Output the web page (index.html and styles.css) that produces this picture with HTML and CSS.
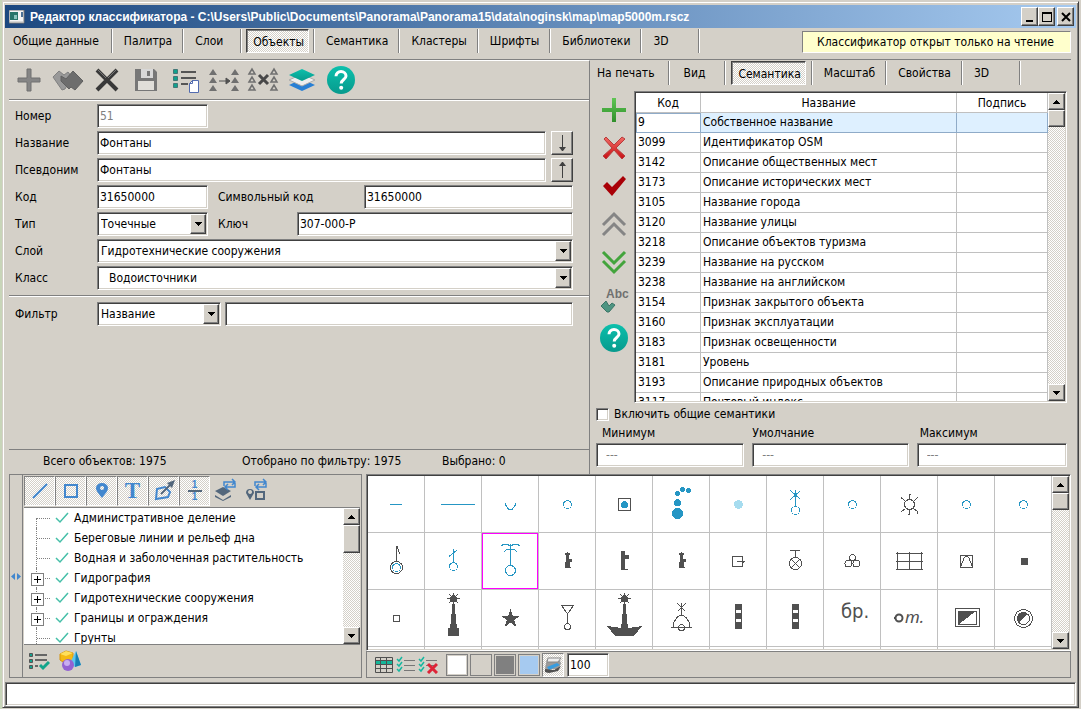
FILE: index.html
```html
<!DOCTYPE html>
<html lang="ru">
<head>
<meta charset="utf-8">
<title>Редактор классификатора</title>
<link rel="stylesheet" href="styles.css">
</head>
<body>
<svg width="0" height="0" class="defs" aria-hidden="true">
  <defs>
    <linearGradient id="teal" x1="0" y1="0" x2="0" y2="1"><stop offset="0" stop-color="#0cc0ac"/><stop offset="1" stop-color="#079a8d"/></linearGradient>
    <linearGradient id="green" x1="0" y1="0" x2="0" y2="1"><stop offset="0" stop-color="#5fc654"/><stop offset="1" stop-color="#2f8f2b"/></linearGradient>
    <linearGradient id="red" x1="0" y1="0" x2="0" y2="1"><stop offset="0" stop-color="#f26a64"/><stop offset="1" stop-color="#c80f14"/></linearGradient>
    <symbol id="help" viewBox="0 0 28 28"><circle cx="14" cy="14" r="14" fill="url(#teal)"/><path d="M9 10.200C9 7.300 11.200 5.600 14 5.600S19 7.300 19 10C19 13.400 14.200 13.600 14.200 17.400" fill="none" stroke="#fff" stroke-width="3"/><circle cx="14.200" cy="21.700" r="2" fill="#fff"/></symbol>
    <symbol id="up" viewBox="0 0 7 4"><path d="M3 0h1v1h1v1h1v1h1v1H0V3h1V2h1V1h1z"/></symbol>
    <symbol id="down" viewBox="0 0 7 4"><path d="M0 0h7v1H6v1H5v1H4v1H3V3H2V2H1V1H0z"/></symbol>
    <symbol id="tick" viewBox="0 0 14 12"><path d="M1 6l4 4L13 1" fill="none" stroke="#45bfa8" stroke-width="1.500"/></symbol>
    <symbol id="ring" viewBox="0 0 56 56"><circle cx="28.500" cy="28.500" r="4" fill="none" stroke="#2596c4"/></symbol>
    <symbol id="buoy" viewBox="0 0 56 56"><path d="M28 19h1v1h2v2h-1v4h3v3h-2v5h1v1h-6v-6h1v-7h-1v-2h2z" fill="#505050"/></symbol>
    <symbol id="pole" viewBox="0 0 56 56"><path d="M25 14h7v25h-7zM26 20v3h5v-3zM26 29v3h5v-3z" fill="#505050" fill-rule="evenodd"/></symbol>
    <symbol id="tower" viewBox="0 0 56 56"><path d="M27 14h3v10h1v10h1v4h2v8H23v-8h2v-4h1V24h1z" fill="#505050"/><path d="M28.500 3v11M22 8.500h13M24 4l9 9M33 4l-9 9" stroke="#505050"/><circle cx="28.500" cy="8.500" r="3.500" fill="#505050"/></symbol>
  </defs>
</svg>

<main class="window">
  <header class="titlebar">
    <svg class="app-icon" width="16" height="14" viewBox="0 0 16 14"><path d="M0 0h15v13H0z" fill="#f4f4f4" stroke="#777"/><path d="M1 2h8v8H1z" fill="#28756a"/><path d="M5 5h3v4H5z" fill="#8bc4bd"/><path d="M12 2h2v5h-2z" fill="#4c7196"/><path d="M1 12h14" stroke="#bbb"/></svg>
    <h1>Редактор классификатора - C:\Users\Public\Documents\Panorama\Panorama15\data\noginsk\map\map5000m.rscz</h1>
    <div class="window-buttons">
      <button aria-label="Свернуть"><svg width="12" height="12"><path d="M2 9h7v2H2z"/></svg></button>
      <button aria-label="Развернуть"><svg width="12" height="12"><path d="M1 1h10v10H1zM2 3v7h8V3z" fill-rule="evenodd"/></svg></button>
      <button class="close" aria-label="Закрыть"><svg width="12" height="12"><path d="M2 2l8 8M10 2l-8 8" stroke="#000" stroke-width="2"/></svg></button>
    </div>
  </header>

  <div class="content">
    <nav class="tabs main-tabs">
      <button class="tab first">Общие данные</button><button class="tab">Палитра</button><button class="tab wide">Слои</button><button class="tab active"><span>Объекты</span></button><button class="tab">Семантика</button><button class="tab">Кластеры</button><button class="tab">Шрифты</button><button class="tab">Библиотеки</button><button class="tab wide">3D</button>
      <p class="notice">Классификатор открыт только на чтение</p>
    </nav>

    <div class="upper">
      <section class="object-pane">
        <div class="toolbar">
          <button aria-label="Добавить"><svg width="28" height="28"><path d="M12 3h4v9h9v4h-9v9h-4v-9H3v-4h9z" fill="#858585" stroke="#707070"/></svg></button>
          <button aria-label="Копировать"><svg width="34" height="28"><path d="M2 11l6-6 5 4 4-3 4 5-7 12-3 1z" fill="#999" stroke="#808080"/><path d="M10 10l5 3 7-8 10 10-8 9-4-3-2 2-8-8z" fill="#6d6d6d" stroke="#606060"/></svg></button>
          <button aria-label="Удалить"><svg width="28" height="28"><path d="M4 4l20 20M24 4L4 24" stroke="#393939" stroke-width="4"/><path d="M5 4l8 8M23 4l-8 8" stroke="#777"/></svg></button>
          <button aria-label="Сохранить"><svg width="28" height="28"><path d="M3 3h19l3 3v19H3z" fill="#777"/><path d="M9 3h12v9H9z" fill="#d8d8d8"/><path d="M15 5h3v5h-3z" fill="#777"/><path d="M6 15h16v9H6z" fill="#e0ded9"/></svg></button>
          <button aria-label="Список"><svg width="28" height="28"><path d="M2.500 3.500h4v4h-4zM2.500 10.500h4v4h-4zM2.500 17.500h4v4h-4z" fill="#12a18d" stroke="#477"/><path d="M10 6h15M10 12h15M10 18h7" stroke="#555" stroke-width="2"/><path d="M21.500 14.500h6v12h-9v-9z" fill="#fff" stroke="#526baf"/><path d="M21.500 14v3.500h-3" fill="none" stroke="#526baf"/></svg></button>
          <button aria-label="Заменить"><svg width="34" height="28"><path d="M2 9l4-6 4 6zM2 17l4-6 4 6zM2 25l4-6 4 6zM24 9l4-6 4 6zM24 17l4-6 4 6zM24 25l4-6 4 6z" fill="#707070"/><path d="M12 15h9M19 12l4 3-4 3z" stroke="#505050" stroke-width="1" fill="#505050"/></svg></button>
          <button aria-label="Удалить группу"><svg width="34" height="28"><path d="M3 8l3-5 3 5zM3 16l3-5 3 5zM3 24l3-5 3 5zM25 8l3-5 3 5zM25 16l3-5 3 5zM25 24l3-5 3 5z" fill="none" stroke="#707070" stroke-width="1.500"/><path d="M13 9l9 9M22 9l-9 9" stroke="#484848" stroke-width="3"/></svg></button>
          <button aria-label="Слои"><svg width="28" height="28"><path d="M1 19l13-6 13 6-13 6z" fill="#287fd4"/><path d="M1 14l13-6 13 6-13 6z" fill="#eee" stroke="#aaa"/><path d="M1 9l13-6 13 6-13 6z" fill="url(#teal)"/></svg></button>
          <button aria-label="Справка"><svg width="28" height="28"><use href="#help"/></svg></button>
        </div>

        <form class="object-form">
          <div class="row"><label for="number">Номер</label><input id="number" class="short" value="51" disabled></div>
          <div class="row"><label for="name">Название</label><input id="name" class="grow" value="Фонтаны"><button type="button" class="square" aria-label="Вниз"><svg width="10" height="20"><path d="M5.500 2v15" stroke="#404040"/><path d="M2 14h7l-3 4H5z" fill="#404040"/></svg></button></div>
          <div class="row"><label for="alias">Псевдоним</label><input id="alias" class="grow" value="Фонтаны"><button type="button" class="square" aria-label="Вверх"><svg width="10" height="20"><path d="M5.500 3v15" stroke="#404040"/><path d="M2 6h7L6 2H5z" fill="#404040"/></svg></button></div>
          <div class="row"><label for="code">Код</label><input id="code" class="short" value="31650000"><label class="code-label" for="symcode">Символьный код</label><input id="symcode" class="grow" value="31650000"></div>
          <div class="row"><label for="type">Тип</label><span class="combo short"><select id="type"><option>Точечные</option></select><i><svg width="7" height="4"><use href="#down"/></svg></i></span><label class="key-label" for="key">Ключ</label><input id="key" class="grow" value="307-000-P"></div>
          <div class="row"><label for="layer">Слой</label><span class="combo grow"><select id="layer"><option>Гидротехнические сооружения</option></select><i><svg width="7" height="4"><use href="#down"/></svg></i></span></div>
          <div class="row"><label for="class">Класс</label><span class="combo grow nested"><select id="class"><option>Водоисточники</option></select><i><svg width="7" height="4"><use href="#down"/></svg></i></span></div>
        </form>
        <div class="filter row"><label for="filter">Фильтр</label><span class="combo filter-kind"><select id="filter"><option>Название</option></select><i><svg width="7" height="4"><use href="#down"/></svg></i></span><input class="grow" aria-label="Текст фильтра"></div>
        <div class="spacer"></div>
        <footer class="totals"><span>Всего объектов: 1975</span><span>Отобрано по фильтру: 1975</span><span>Выбрано: 0</span></footer>
      </section>

      <section class="semantic-pane">
        <nav class="tabs side-tabs">
          <button class="tab print">На печать</button><button class="tab view">Вид</button><button class="tab active"><span>Семантика</span></button><button class="tab">Масштаб</button><button class="tab">Свойства</button><button class="tab wide">3D</button>
        </nav>
        <div class="semantic-body">
          <div class="side-tools">
            <button aria-label="Добавить"><svg width="28" height="28"><path d="M12 2h4v10h10v4H16v10h-4V16H2v-4h10z" fill="url(#green)"/></svg></button>
            <button aria-label="Удалить"><svg width="28" height="28"><path d="M4 5l2-2 8 8 8-8 3 2-9 9 9 8-3 3-8-9-8 9-3-3 9-8z" fill="url(#red)" stroke="#b63d3d"/></svg></button>
            <button aria-label="Применить"><svg width="28" height="28"><path d="M3 14l4-4 5 5L23 4l3 3-14 17z" fill="#a90007"/></svg></button>
            <button aria-label="Выше"><svg width="28" height="28"><path d="M3 15L14 4l11 11M3 25l11-11 11 11" fill="none" stroke="#858585" stroke-width="3"/></svg></button>
            <button aria-label="Ниже"><svg width="28" height="28"><path d="M3 4l11 11L25 4M3 13l11 11 11-11" fill="none" stroke="#43a43c" stroke-width="3"/></svg></button>
            <button class="abc" aria-label="Проверить текст"><span>Abc</span><svg width="16" height="13"><path d="M1 6l5-5 3 5 3-3 3 2-6 7H7z" fill="#4e9582" stroke="#3b7567"/></svg></button>
            <button aria-label="Справка"><svg width="28" height="28"><use href="#help"/></svg></button>
          </div>
          <div class="list-frame">
            <div class="table-clip">
              <table>
                <thead><tr><th class="c-code">Код</th><th>Название</th><th class="c-sign">Подпись</th></tr></thead>
                <tbody>
                  <tr class="current"><td>9</td><td>Собственное название</td><td></td></tr>
                  <tr><td>3099</td><td>Идентификатор OSM</td><td></td></tr>
                  <tr><td>3142</td><td>Описание общественных мест</td><td></td></tr>
                  <tr><td>3173</td><td>Описание исторических мест</td><td></td></tr>
                  <tr><td>3105</td><td>Название города</td><td></td></tr>
                  <tr><td>3120</td><td>Название улицы</td><td></td></tr>
                  <tr><td>3218</td><td>Описание объектов туризма</td><td></td></tr>
                  <tr><td>3239</td><td>Название на русском</td><td></td></tr>
                  <tr><td>3238</td><td>Название на английском</td><td></td></tr>
                  <tr><td>3154</td><td>Признак закрытого объекта</td><td></td></tr>
                  <tr><td>3160</td><td>Признак эксплуатации</td><td></td></tr>
                  <tr><td>3183</td><td>Признак освещенности</td><td></td></tr>
                  <tr><td>3181</td><td>Уровень</td><td></td></tr>
                  <tr><td>3193</td><td>Описание природных объектов</td><td></td></tr>
                  <tr><td>3117</td><td>Почтовый индекс</td><td></td></tr>
                </tbody>
              </table>
            </div>
            <div class="scroll"><button aria-label="Вверх"><svg width="7" height="4"><use href="#up"/></svg></button><div class="thumb"></div><button class="end" aria-label="Вниз"><svg width="7" height="4"><use href="#down"/></svg></button></div>
          </div>
        </div>
        <label class="check"><input type="checkbox">Включить общие семантики</label>
        <div class="limits">
          <label>Минимум<input value="---" disabled></label>
          <label>Умолчание<input value="---" disabled></label>
          <label>Максимум<input value="---" disabled></label>
        </div>
      </section>
    </div>

    <div class="lower">
      <section class="layers">
        <div class="splitter"><svg width="10" height="7"><path d="M4 0v7L0 3.500zM6 0v7l4-3.500z" fill="#4287ce"/></svg></div>
        <div class="layers-body">
          <div class="kinds">
            <button class="on" aria-label="Линии"><svg width="24" height="24"><path d="M5 19L19 5" stroke="#4287ce" stroke-width="2"/></svg></button>
            <button class="on" aria-label="Площади"><svg width="24" height="24"><path d="M6 6h12v12H6z" fill="none" stroke="#4287ce" stroke-width="2"/></svg></button>
            <button class="on" aria-label="Точки"><svg width="24" height="24"><path d="M12 19C9 15 6 12 6 9a6 5 0 0 1 12 0c0 3-3 6-6 10zM12 7a2 2 0 1 0 .1 0z" fill="#4287ce" fill-rule="evenodd"/></svg></button>
            <button class="on letter" aria-label="Подписи">T</button>
            <button class="on" aria-label="Векторы"><svg width="24" height="24"><path d="M5 10l8-2 5 5-2 5-12 2z" fill="none" stroke="#4287ce" stroke-width="2"/><path d="M9 15L20 4" stroke="#53677c" stroke-width="2"/><path d="M15 4l8-3-3 8z" fill="#53677c"/></svg></button>
            <button class="on" aria-label="Шаблоны"><span class="fraction"><b>1</b><b>1</b></span></button>
            <button aria-label="Переключить слои"><svg width="26" height="26"><path d="M2 13l8-4 8 4-8 5z" fill="#53677c"/><path d="M11 8V4h10M19 1l3 3-3 3M22 5v4H12M15 6l-3 3 3 3" fill="none" stroke="#4287ce" stroke-width="1.500"/><path d="M2 17l8 5 8-5v2l-8 4-8-4z" fill="#53677c"/></svg></button>
            <button aria-label="Переключить виды"><svg width="26" height="26"><path d="M6 22l-4-7a4 4 0 1 1 8 0zM6 12a2 2 0 1 0 .1 0z" fill="#53677c" fill-rule="evenodd"/><path d="M12 14h8v7h-8z" fill="none" stroke="#53677c" stroke-width="2"/><path d="M11 8V4h10M19 1l3 3-3 3M22 5v4H12M15 6l-3 3 3 3" fill="none" stroke="#4287ce" stroke-width="1.500"/></svg></button>
          </div>
          <div class="tree-frame">
            <ul class="tree">
              <li><i class="branch"></i><svg width="14" height="12"><use href="#tick"/></svg>Административное деление</li>
              <li><i class="branch"></i><svg width="14" height="12"><use href="#tick"/></svg>Береговые линии и рельеф дна</li>
              <li><i class="branch"></i><svg width="14" height="12"><use href="#tick"/></svg>Водная и заболоченная растительность</li>
              <li><i class="branch plus"></i><svg width="14" height="12"><use href="#tick"/></svg>Гидрография</li>
              <li><i class="branch plus"></i><svg width="14" height="12"><use href="#tick"/></svg>Гидротехнические сооружения</li>
              <li><i class="branch plus"></i><svg width="14" height="12"><use href="#tick"/></svg>Границы и ограждения</li>
              <li><i class="branch"></i><svg width="14" height="12"><use href="#tick"/></svg>Грунты</li>
            </ul>
            <div class="scroll"><button aria-label="Вверх"><svg width="7" height="4"><use href="#up"/></svg></button><div class="thumb tall"></div><button class="end" aria-label="Вниз"><svg width="7" height="4"><use href="#down"/></svg></button></div>
          </div>
          <div class="tree-tools">
            <button aria-label="Отметить"><svg width="22" height="20"><path d="M1.500 2.500h3v3h-3zM1.500 8.500h3v3h-3zM1.500 14.500h3v3h-3z" fill="#12a18d" stroke="#555"/><path d="M7 4h12M7 9h12M7 15h3" stroke="#666" stroke-width="2"/><path d="M12 14l3 3 6-6" fill="none" stroke="#11a58b" stroke-width="3"/></svg></button>
            <button aria-label="Цвета"><svg width="22" height="22"><path d="M1 4l6-3 7 2v8l-7 3-6-4z" fill="#f5b915" stroke="#d4950f"/><path d="M1 4l6 2 7-3-7-2z" fill="#ffdf5c"/><path d="M17 1l5 14-6 2-5-4z" fill="#5cc6ee"/><path d="M17 1l-1 16 6-2z" fill="#167fb5"/><circle cx="9" cy="15" r="6" fill="#9362d2"/><circle cx="8" cy="13" r="3" fill="#c8adf0"/></svg></button>
          </div>
        </div>
      </section>

      <section class="gallery">
        <div class="gallery-frame">
          <div class="symbols">
            <div><svg><path d="M22 28.500h12" class="b"/></svg></div>
            <div><svg><path d="M16 28.500h34" class="b"/></svg></div>
            <div><svg><path d="M23.500 27v2l3 4h4l3-4v-2" class="b"/></svg></div>
            <div><svg><use href="#ring"/></svg></div>
            <div><svg><path d="M22.500 22.500h12v12h-12z" class="g"/><circle cx="28.500" cy="28.500" r="3.500" class="bf"/></svg></div>
            <div><svg class="bf"><circle cx="24.500" cy="37.500" r="5.500"/><circle cx="24.500" cy="26.500" r="3.500"/><circle cx="24.500" cy="17.500" r="2.500"/><circle cx="29.500" cy="13.500" r="2.500"/><circle cx="35.500" cy="14.500" r="2.500"/></svg></div>
            <div><svg><circle cx="28.500" cy="28.500" r="4.500" fill="#a6dcef"/></svg></div>
            <div><svg class="b"><path d="M28.500 14v16M23.500 14.500l10 9M33.500 14.500l-10 9"/><circle cx="28.500" cy="34.500" r="4"/></svg></div>
            <div><svg><use href="#ring"/></svg></div>
            <div><svg class="g"><circle cx="28.500" cy="28.500" r="5"/><path d="M28.500 23.500v-5h1M28.500 33.500v5h-2M24.500 25.500l-4-4v1M32.500 25.500l4-4h-1M24.500 32.500l-4 3h-1M32.500 32.500l4 3v2h-1"/></svg></div>
            <div><svg><use href="#ring"/></svg></div>
            <div><svg><use href="#ring"/></svg></div>

            <div><svg><g class="g"><path d="M28.500 28V13.500h1l1 5 2 3"/><circle cx="28.500" cy="34.500" r="6"/></g><circle cx="28.500" cy="34.500" r="4" class="b"/></svg></div>
            <div><svg class="b"><path d="M28.500 16v13M24 23.500l8-6.500"/><circle cx="28.500" cy="33.500" r="4"/></svg></div>
            <div class="selected"><svg class="b"><path d="M28.500 11v21M19 12.500l3-1h3l3 1h1l3-1h3l3 1M22 18.500l3-2h7l3 2"/><circle cx="28.500" cy="37.500" r="5"/></svg></div>
            <div><svg><use href="#buoy"/></svg></div>
            <div><svg><path d="M25 18h4v4h4v4h-4v10h3v1h-7z" class="gf"/></svg></div>
            <div><svg><use href="#buoy"/></svg></div>
            <div><svg class="g"><path d="M22.500 23.500h10v10h-10zM27 28.500h8M33.500 27.500v2"/></svg></div>
            <div><svg class="g"><path d="M23 17.500h10M28.500 17v7M24.500 26.500l8 8M32.500 26.500l-8 8"/><circle cx="28.500" cy="30.500" r="6"/></svg></div>
            <div><svg class="g"><circle cx="28.500" cy="24.500" r="3"/><circle cx="24.500" cy="30.500" r="3.500"/><circle cx="32.500" cy="30.500" r="3.500"/></svg></div>
            <div><svg class="g"><path d="M15 20.500h27M15 28.500h27M15 36.500h27M16.500 19v18M28.500 19v18M40.500 19v18"/></svg></div>
            <div><svg class="g"><path d="M22.500 22.500h12v12h-12zM23 33l3-8 2-2h1l2 2 3 8"/></svg></div>
            <div><svg><path d="M26 25h7v7h-7z" class="gf"/></svg></div>

            <div><svg><path d="M25.500 25.500h6v6h-6z" class="g"/></svg></div>
            <div><svg><use href="#tower"/></svg></div>
            <div><svg><path d="M28.500 19l2.200 7H38l-5.800 4 2.300 7-6-4.400-6 4.400 2.300-7-5.800-4h7.300z" class="gf"/></svg></div>
            <div><svg class="g"><path d="M22.500 15.500h12l-6 8.500zM28.500 24v9"/><circle cx="28.500" cy="36.500" r="3"/></svg></div>
            <div><svg><use href="#tower"/><path d="M11 36l14 2h7l14-2-8 10H19z" class="gf"/></svg></div>
            <div><svg class="g"><path d="M28.500 13v12M24.500 13.500l8 8M32.500 13.500l-8 8M20.500 37v-4l3-5 3-2.500h4l3 2.500 3 5v4M18 37.500h21"/><circle cx="28.500" cy="37.500" r="3"/></svg></div>
            <div><svg><use href="#pole"/></svg></div>
            <div><svg><use href="#pole"/></svg></div>
            <div class="abbr">бр.</div>
            <div class="abbr slant"><svg class="dot"><circle cx="5" cy="5" r="3.500"/><path d="M0 5h2"/></svg><em>т.</em></div>
            <div><svg><path d="M17.500 18.500h24v18h-24zM20.500 21.500h18v13h-18z" class="g"/><path d="M20 21h18L20 35z" class="gf"/></svg></div>
            <div><svg><circle cx="28.500" cy="28.500" r="9" class="g"/><circle cx="28.500" cy="28.500" r="6" class="g"/><path d="M24 33a6 6 0 0 1 8-9z" class="gf"/></svg></div>

            <div></div><div></div><div></div><div></div><div></div><div></div><div></div><div></div><div></div><div></div><div></div><div></div>
          </div>
          <div class="scroll"><button aria-label="Вверх"><svg width="7" height="4"><use href="#up"/></svg></button><div class="thumb"></div><button class="end" aria-label="Вниз"><svg width="7" height="4"><use href="#down"/></svg></button></div>
        </div>
        <div class="gallery-tools">
          <button aria-label="Таблица"><svg width="20" height="18"><path d="M1 5h18v3H1z" fill="#14b699"/><path d="M1.500 1.500h17v15h-17zM1 4.500h18M1 8.500h18M1 12.500h18M6.500 1v15M12.500 1v15" fill="none" stroke="#505050"/></svg></button>
          <button aria-label="Выбрать все"><svg width="20" height="18"><path d="M8 4.500h11M8 9.500h11M8 14.500h11" stroke="#777"/><path d="M1 3l2 2 3-4M1 8l2 2 3-4M1 13l2 2 3-4" fill="none" stroke="#16b7a0" stroke-width="1.500"/></svg></button>
          <button aria-label="Снять выбор"><svg width="20" height="18"><path d="M8 4.500h11M8 9.500h11" stroke="#777"/><path d="M1 3l2 2 3-4M1 8l2 2 3-4M1 13l2 2 3-4" fill="none" stroke="#16b7a0" stroke-width="1.500"/><path d="M10 8l9 9M19 8l-9 9" stroke="#dd2438" stroke-width="3"/></svg></button>
          <button class="swatch white" aria-label="Белый фон"></button><button class="swatch" aria-label="Серый фон"></button><button class="swatch dark" aria-label="Темный фон"></button><button class="swatch blue" aria-label="Голубой фон"></button>
          <button class="print-button" aria-label="Печать"><svg width="20" height="20"><path d="M4 4h12l2 4-2 6H8l-4 4-2-5z" fill="#999"/><path d="M5 3h13l-3 4H4z" fill="#eee" stroke="#888"/><path d="M4 12l10-4 3 2-11 5z" fill="#369ce0"/><path d="M2 14l9 1 7-4-3 5-9 2-4-1z" fill="#505050"/></svg></button>
          <input class="scale" value="100" aria-label="Масштаб">
        </div>
      </section>
    </div>
  </div>
  <input class="message" aria-label="Сообщение" readonly>
</main>
</body>
</html>
```
FILE: styles.css
```css
* { box-sizing: border-box; }
body {
  margin: 0;
  height: 100vh;
  padding: 1px 2px;
  background: linear-gradient(90deg, #c8d5b9 2px, #d4d0c8 2px);
  color: #000;
  font: 12px/16px "DejaVu Sans Condensed", "DejaVu Sans", sans-serif;
}
button, input, select { font: inherit; color: inherit; margin: 0; border-radius: 0; }
button { padding: 0; border: 0; background: none; display: flex; align-items: center; justify-content: center; }
svg { display: block; flex: none; }
.defs { position: absolute; }
p, h1, ul { margin: 0; padding: 0; }

.window {
  display: flex;
  flex-direction: column;
  height: 100%;
  padding: 3px 2px 1px;
  background: #d4d0c8;
  border: 1px solid;
  border-color: #d4d0c8 #404040 #404040 #d4d0c8;
  box-shadow: inset 1px 1px #fff, inset -1px -1px #808080;
}
.titlebar {
  display: flex;
  align-items: center;
  flex: none;
  height: 23px;
  padding: 0 2px 0 4px;
  gap: 5px;
  background: linear-gradient(90deg, #1c4880, #a6caf0);
  color: #fff;
}
.titlebar h1 { flex: 1; font: bold 12px/16px "Liberation Sans", sans-serif; white-space: nowrap; }
.window-buttons { display: flex; color: #000; }
.window-buttons button, .square, .scroll button, .thumb, .combo i {
  background: #d4d0c8;
  border: 1px solid;
  border-color: #fff #404040 #404040 #fff;
  box-shadow: inset -1px -1px #808080;
}
.window-buttons button { width: 17px; height: 19px; }
.window-buttons .close { margin-left: 2px; }

.content { display: flex; flex-direction: column; flex: 1; min-height: 0; padding: 0 5px 4px 4px; }
.tabs { display: flex; flex: none; }
.tab {
  height: 24px;
  padding: 0 11px;
  border-right: 1px solid #fff;
  box-shadow: inset -1px 0 #808080;
  white-space: nowrap;
}
.tab.first { padding: 0 13px 0 4px; }
.tab.wide { min-width: 58px; justify-content: flex-start; }
.tab.active { padding: 0 5px 0 4px; }
.tab.active span, .kinds .on, .print-button {
  background: repeating-conic-gradient(#d4d0c8 0 25%, #fff 0 50%) 0 0 / 2px 2px;
  border: 1px solid;
  border-color: #404040 #fff #fff #404040;
}
.tab.active span { height: 24px; padding: 4px 4px 2px 6px; box-shadow: inset 1px 1px #808080; }
.main-tabs { height: 31px; padding-top: 1px; }
.notice {
  align-self: flex-start;
  margin: 2px 0 0 auto;
  padding: 2px 16px 2px 14px;
  background: #ffffcc;
  border: 1px solid;
  border-color: #808080 #fff #fff #808080;
  white-space: nowrap;
}

.upper {
  display: grid;
  grid-template-columns: minmax(0, 581fr) minmax(0, 481fr);
  grid-template-rows: minmax(0, 1fr);
  flex: 1;
  min-height: 0;
  border-top: 1px solid #808080;
}
.object-pane {
  display: flex;
  flex-direction: column;
  border-right: 1px solid #808080;
  border-top: 1px solid #fff;
}
.toolbar {
  display: flex;
  align-items: center;
  flex: none;
  height: 39px;
  border-bottom: 1px solid #808080;
  box-shadow: 0 1px #fff;
}
.toolbar button { width: 39px; height: 38px; }
.object-form { display: grid; gap: 3px; padding: 4px 16px 5px 6px; border-bottom: 1px solid #808080; box-shadow: 0 1px #fff; }
.row { display: flex; height: 24px; }
.row label { flex: none; width: 82px; padding-top: 4px; }
.row .code-label { width: 156px; padding-left: 10px; }
.row .key-label { width: 89px; padding-left: 10px; }
.grow { flex: 1; min-width: 0; }
.short { width: 111px; }
.filter { padding: 0 16px 0 6px; margin-top: 6px; }
.filter-kind { width: 124px; margin-right: 4px; }
.spacer { flex: 1; }
input:not([type="checkbox"]), .combo, .list-frame, .gallery-frame {
  background: #fff;
  border: 1px solid;
  border-color: #808080 #fff #fff #808080;
  box-shadow: inset 1px 1px #404040, inset -1px -1px #d4d0c8;
}
input:not([type="checkbox"]) { height: 24px; padding: 0 2px; }
input:disabled { color: #808080; }
.combo { position: relative; display: flex; }
.combo select { flex: 1; min-width: 0; padding: 0 18px 0 3px; border: 0; background: none; appearance: none; }
.combo.nested select { padding-left: 11px; }
.combo i {
  position: absolute;
  top: 1px;
  right: 1px;
  bottom: 1px;
  width: 16px;
  display: flex;
  align-items: center;
  justify-content: center;
  pointer-events: none;
}
.square { width: 22px; height: 24px; margin-left: 5px; }
.totals {
  display: grid;
  grid-template-columns: 199px 200px auto;
  flex: none;
  height: 25px;
  padding: 3px 0 0 34px;
  border-top: 1px solid #808080;
  white-space: nowrap;
}

.semantic-pane { display: flex; flex-direction: column; padding: 1px 4px 7px 6px; }
.side-tabs { height: 30px; }
.side-tabs .print { padding: 0 14px 0 1px; }
.side-tabs .view { padding: 0 20px 0 14px; }
.side-tabs .tab.active { padding: 0 6px 0 5px; }
.semantic-body { display: flex; flex: 1; min-height: 0; }
.side-tools { display: flex; flex-direction: column; flex: none; width: 38px; padding: 5px 0 0 4px; gap: 10px; }
.side-tools button { width: 28px; height: 28px; }
.side-tools .abc { flex-direction: column; align-items: flex-start; font: 12px/12px "Liberation Sans", sans-serif; color: #707070; }
.abc span { padding-left: 6px; font-weight: bold; }
.list-frame { display: flex; flex: 1; min-width: 0; padding: 1px; }
.table-clip { flex: 1; min-width: 0; overflow: hidden; }
table { width: 100%; table-layout: fixed; border-collapse: separate; border-spacing: 0; }
th, td { height: 20px; padding: 0 2px; border: 0 solid #c0c0c0; border-width: 0 1px 1px 0; line-height: 16px; white-space: nowrap; }
th { font-weight: normal; }
td { padding-bottom: 2px; }
.c-code { width: 65px; }
.c-sign { width: 91px; }
.current td { background: #def0ff; border-color: #8fabc8; }
.current td:first-child { background: #fff; box-shadow: inset 1px 1px #8fabc8; }
.scroll {
  display: flex;
  flex-direction: column;
  flex: none;
  width: 17px;
  background: repeating-conic-gradient(#d4d0c8 0 25%, #fff 0 50%) 0 0 / 2px 2px;
}
.scroll button { height: 17px; width: 17px; }
.thumb { height: 17px; }
.thumb.tall { height: 28px; }
.scroll .end { margin-top: auto; }
.check { display: flex; flex: none; align-items: center; gap: 5px; height: 22px; }
.check input {
  appearance: none;
  width: 13px;
  height: 13px;
  background: #fff;
  border: 1px solid;
  border-color: #808080 #fff #fff #808080;
  box-shadow: inset 1px 1px #404040, inset -1px -1px #d4d0c8;
}
.limits { display: grid; flex: none; grid-template-columns: 148fr 156fr 150fr; gap: 8px; }
.limits label { display: flex; flex-direction: column; gap: 2px; text-indent: 6px; }
.limits label + label { text-indent: 0; }
.limits label:last-child { text-indent: 3px; }
.limits input { width: 100%; }
.limits label input { padding-left: 9px; text-indent: 0; }

.lower {
  display: grid;
  grid-template-columns: minmax(0, 353fr) minmax(0, 705fr);
  grid-template-rows: minmax(0, 1fr);
  flex: none;
  height: 204px;
  gap: 4px;
}
.layers { display: flex; border: 1px solid #808080; }
.splitter { display: flex; align-items: center; justify-content: center; flex: none; width: 13px; border-right: 1px solid #808080; }
.layers-body { display: flex; flex-direction: column; flex: 1; min-width: 0; padding: 1px; }
.kinds { display: flex; flex: none; height: 31px; }
.kinds button { width: 31px; height: 30px; }
.kinds .on { border-color: #808080 #fff #fff #808080; }
.kinds .letter { color: #4287ce; font: bold 23px/24px "Liberation Serif", serif; }
.fraction { color: #4287ce; font: bold 10px/10px "Liberation Sans", sans-serif; }
.fraction b { display: block; width: 14px; }
.fraction b + b { border-top: 2px solid #53677c; }
.tree-frame { display: flex; flex: 1; min-height: 0; background: #fff; border: solid #808080; border-width: 1px 0; }
.tree { flex: 1; min-width: 0; overflow: hidden; list-style: none; }
.tree li { display: flex; align-items: center; height: 20px; padding-left: 12px; white-space: nowrap; }
.tree li svg { margin: 0 5px 0 6px; }
.branch {
  position: relative;
  width: 13px;
  height: 20px;
  border-left: 1px dotted #808080;
}
.tree li:first-child .branch { height: 10px; margin-top: 10px; }
.branch::before { content: ""; position: absolute; top: 10px; left: 0; width: 13px; border-top: 1px dotted #808080; }
.tree li:first-child .branch::before { top: 0; }
.plus::after {
  content: "";
  position: absolute;
  top: 5px;
  left: -6px;
  width: 11px;
  height: 11px;
  border: 1px solid #808080;
  background: linear-gradient(#000, #000) center / 7px 1px no-repeat, linear-gradient(#000, #000) center / 1px 7px no-repeat, #fff;
}
.tree-tools { display: flex; flex: none; align-items: center; height: 31px; padding-left: 4px; gap: 9px; }

.gallery { display: flex; flex-direction: column; }
.gallery-frame { display: flex; height: 177px; flex: none; padding: 1px; }
.symbols { display: grid; flex: 1; min-width: 0; grid-template-columns: repeat(12, 1fr); grid-auto-rows: 57px; overflow: hidden; }
.symbols > div { display: flex; justify-content: center; border: solid #c0c0c0; border-width: 0 1px 1px 0; }
.symbols > .selected { box-shadow: inset 0 0 0 1px #f0f; }
.symbols svg { width: 56px; height: 56px; shape-rendering: crispEdges; }
.b { fill: none; stroke: #2596c4; }
.g { fill: none; stroke: #505050; }
.bf { fill: #2596c4; }
.gf { fill: #505050; }
.symbols .abbr { padding: 11px 0 0 6px; color: #505050; font: 20px/20px "DejaVu Sans Condensed", "DejaVu Sans", sans-serif; }
.symbols .slant { align-items: flex-start; padding: 16px 0 0; font: 17px/22px "Noto Sans", sans-serif; }
.symbols .slant .dot { width: 11px; height: 10px; margin-top: 7px; fill: none; stroke: #505050; stroke-width: 2px; shape-rendering: auto; }
.gallery-tools { display: flex; flex: 1; align-items: center; gap: 2px; padding-left: 7px; border: 1px solid #808080; }
.swatch { width: 22px; height: 22px; background: #d4d0c8; border: 1px solid #808080; box-shadow: inset 0 0 0 1px #d4d0c8; }
.white { background: #fff; margin-left: 6px; }
.dark { background: #808080; }
.blue { background: #a6caf0; }
.print-button { width: 22px; height: 24px; border-color: #808080 #fff #fff #808080; }
.gallery-tools .scale { width: 42px; margin-left: 1px; }
.message { flex: none; width: 100%; }
```
